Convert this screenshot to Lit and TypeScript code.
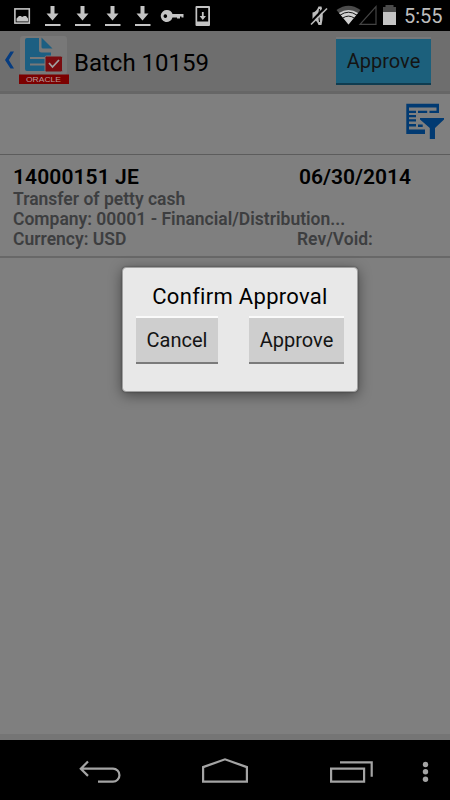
import { LitElement, html, css } from "lit";
import { customElement } from "lit/decorators.js";

@customElement("status-bar")
class StatusBar extends LitElement {
  static styles = css`
    :host { display: flex; height: 31px; background: #000; color: #c0c0c0; box-sizing: border-box; padding-left: 8px; }
    svg { display: block; flex: none; }
    .right { margin-left: auto; display: flex; }
    .time { width: 46px; font: 20px/33px Roboto, sans-serif; color: #bdbdbd; white-space: nowrap; }
  `;
  render() {
    const download = html`<svg width="30" height="31" viewBox="0 0 30 31">
      <path d="M12.500 6h4v7.500h4L14.500 20.500 8.500 13.500h4z M7 24h15.500v2H7z" fill="#c4c4c4" /></svg>`;
    return html`
      <svg width="30" height="31" viewBox="0 0 30 31">
        <rect x="6.900" y="8.900" width="14.400" height="14.200" fill="none" stroke="#c4c4c4" stroke-width="1.600" />
        <path d="M8.500 21.500v-3l2.500-2.500h2l1 1 2-1h2l2 2.500v3z" fill="#c4c4c4" />
      </svg>
      ${[0, 1, 2, 3].map(() => download)}
      <svg width="30" height="31" viewBox="0 0 30 31">
        <path fill-rule="evenodd" fill="#c4c4c4" d="M9 10a6 6 0 0 1 5.500 4H25.500v3.600h-2v-1h-1.500v2h-3v-1H14.500A6 6 0 1 1 9 10z M7.300 14.300a1.800 1.800 0 1 0 .1 0z" />
      </svg>
      <svg width="30" height="31" viewBox="0 0 30 31">
        <path fill-rule="evenodd" fill="#c4c4c4" d="M8.500 6h12.500q1 0 1 1v18q0 1-1 1H8.500q-1 0-1-1V7q0-1 1-1z M9.200 8v13.500h11V8z" />
        <path fill="#c4c4c4" d="M13.900 12h1.800v4h2.300l-3.200 4-3.200-4h2.300z" />
      </svg>
      <div class="right">
        <svg width="96" height="31" viewBox="308 0 96 31">
          <path d="M312.500 12.500q4-.5 6-6h3q2.500 9 0 18.500h-3q-2-5.500-6-6z" fill="#bcbcbc" />
          <path d="M319.500 9q-1.700 6.500 0 13" fill="none" stroke="#000" stroke-width="1" />
          <path d="M309.500 23.500L325.500 7" stroke="#000" stroke-width="2.400" />
          <path d="M311 24.500L327 8.500" stroke="#bcbcbc" stroke-width="1.600" />
          <path d="M336.500 10q12-8.500 24 0l-12 14.500z" fill="#4b4b4b" />
          <path d="M339 13q9.500-6 19 0l-9.500 11.500z" fill="#d0d0d0" />
          <path d="M340 15.200q8.500-6 17 0M342.500 18.200q6-4.200 12 0" fill="none" stroke="#000" stroke-width="0.900" />
          <path d="M376 6.500v17.800h-16z" fill="none" stroke="#444" stroke-width="1.200" />
          <path d="M385.500 5h8v2h2.500v6h-13V7h2.500z" fill="#4a4a4a" />
          <rect x="383" y="12" width="13" height="13" fill="#c4c4c4" />
        </svg>
        <div class="time">5:55</div>
      </div>`;
  }
}

@customElement("journal-row")
class JournalRow extends LitElement {
  static styles = css`
    :host { display: block; box-sizing: border-box; height: 104px; padding: 11px 13px 0; border-top: 1px solid #5c5c5c; border-bottom: 2px solid #686868; font-family: Roboto, sans-serif; font-weight: 600; color: #3d3e40; }
    .line { display: grid; grid-template-columns: 284px 1fr; height: 20px; font-size: 17.5px; line-height: 20px; white-space: nowrap; }
    .head { height: 23px; font-size: 21px; line-height: 22px; color: #000; grid-template-columns: 286px 1fr; }
    .id { letter-spacing: 0.1px; }
  `;
  render() {
    return html`
      <div class="line head"><span class="id">14000151 JE</span><span>06/30/2014</span></div>
      <div class="line"><span>Transfer of petty cash</span></div>
      <div class="line"><span>Company: 00001 - Financial/Distribution...</span></div>
      <div class="line"><span>Currency: USD</span><span>Rev/Void:</span></div>`;
  }
}

@customElement("confirm-dialog")
class ConfirmDialog extends LitElement {
  static styles = css`
    :host { display: block; position: absolute; left: 122px; top: 267px; width: 236px; height: 125px; box-sizing: border-box; background: #e8e8e8; border: 1px solid #a0a0a0; border-radius: 4px; box-shadow: 0 3px 14px rgba(0, 0, 0, 0.45), 0 0 2px rgba(0, 0, 0, 0.4); font-family: Roboto, sans-serif; color: #000; padding: 15px 13px 0; }
    .title { font-size: 22px; line-height: 27px; height: 33px; text-align: center; letter-spacing: 0.3px; white-space: nowrap; }
    .actions { display: flex; justify-content: space-between; }
    button { box-sizing: border-box; height: 48px; padding: 0; border: 0; border-top: 2px solid #fafafa; border-bottom: 2px solid #7b7b7b; background: #cecece; font: 20px Roboto, sans-serif; color: #141414; }
    .cancel { width: 82px; }
    .approve { width: 95px; }
  `;
  render() {
    return html`
      <div class="title">Confirm Approval</div>
      <div class="actions"><button class="cancel">Cancel</button><button class="approve">Approve</button></div>`;
  }
}

@customElement("app-root")
class AppRoot extends LitElement {
  static styles = css`
    :host { display: flex; flex-direction: column; position: relative; width: 450px; height: 800px; background: #7f7f7f; overflow: hidden; font-family: Roboto, sans-serif; }
    svg { display: block; }
    .header { display: flex; height: 63px; box-sizing: border-box; background: #6e6e6e; border-bottom: 3px solid #666; }
    .title { font-size: 24px; line-height: 64px; margin-left: 2px; color: #000; white-space: nowrap; }
    .approve { box-sizing: border-box; width: 95px; height: 48px; margin: 6px 19px 0 auto; padding: 0; border: 0; border-top: 2px solid #77787a; border-bottom: 2px solid #0f3c50; background: #1c607c; font: 20px Roboto, sans-serif; color: #141414; }
    .tools { height: 60px; display: flex; justify-content: flex-end; }
    .oracle { font: 7.500px "Liberation Sans", sans-serif; fill: #b59a9a; }
    .grow { flex: 1; border-bottom: 6px solid #757575; }
    .nav { height: 60px; background: #000; }
  `;
  render() {
    return html`
      <status-bar></status-bar>
      <div class="header">
        <svg width="72" height="60" viewBox="0 31 72 60">
          <path d="M10.500 51.500h3.500L8.800 60l5.200 8.500h-3.500L5 60z" fill="#063c80" />
          <rect x="20" y="36" width="47" height="39" rx="3" fill="#787878" />
          <path d="M27 38h12v12q0 2.500 2.500 2.500H51V71H27q-2 0-2-2V40q0-2 2-2z" fill="#1c5f82" />
          <path d="M41.500 37.500v9.500q0 1.500 1.500 1.500h9.500z" fill="#1c5f82" />
          <path d="M30 58h15M30 64.500h15" stroke="#787878" stroke-width="2" />
          <rect x="45" y="56" width="17.500" height="16" rx="1.500" fill="#790c10" stroke="#787878" stroke-width="1" />
          <path d="M49 63l3.500 4 6.500-7" fill="none" stroke="#a0a0a0" stroke-width="1.800" />
          <rect x="19" y="74.500" width="50" height="9.500" fill="#7c0000" />
          <text class="oracle" x="26" y="82" textLength="35" lengthAdjust="spacingAndGlyphs">ORACLE</text>
        </svg>
        <div class="title">Batch 10159</div>
        <button class="approve">Approve</button>
      </div>
      <div class="tools">
        <svg width="50" height="60" viewBox="400 94 50 60">
          <g fill="#013a72">
            <path d="M406.300 103.700H439v9.300h-9.500v-2.300h7v-3.200h-27.500v3.200h7v2.300h-7v2h7v2.300h-7v2h7v2.300h-7v2.500h7v2.300h-7v3.200h16v4.400h-18.700z" />
            <path d="M418 110.700h9.200v2.300H418zM418 124.600h4.700v2.300H418z" />
            <path d="M420 118h24v1.500l-9 8.500v11h-5.200v-11l-9.800-8.500z" />
          </g>
        </svg>
      </div>
      <journal-row></journal-row>
      <div class="grow"></div>
      <div class="nav">
        <svg width="450" height="60" viewBox="0 740 450 60" fill="none" stroke="#a4a4a4" stroke-width="2.200">
          <path d="M88 761.500l-7.200 7.200 7.200 7.200M80.500 768.700h32.500a6.300 6.300 0 0 1 0 12.900H98" />
          <path d="M203.100 781.600v-14.500l21.900-7.800 21.900 7.800v14.500z" />
          <path d="M331.100 768.600h33v13h-33zM340 762.300h31.700v14.500" />
          <g fill="#a4a4a4" stroke="none"><circle cx="425.500" cy="764.500" r="2.700" /><circle cx="425.500" cy="771.800" r="2.700" /><circle cx="425.500" cy="779.300" r="2.700" /></g>
        </svg>
      </div>
      <confirm-dialog></confirm-dialog>`;
  }
}
